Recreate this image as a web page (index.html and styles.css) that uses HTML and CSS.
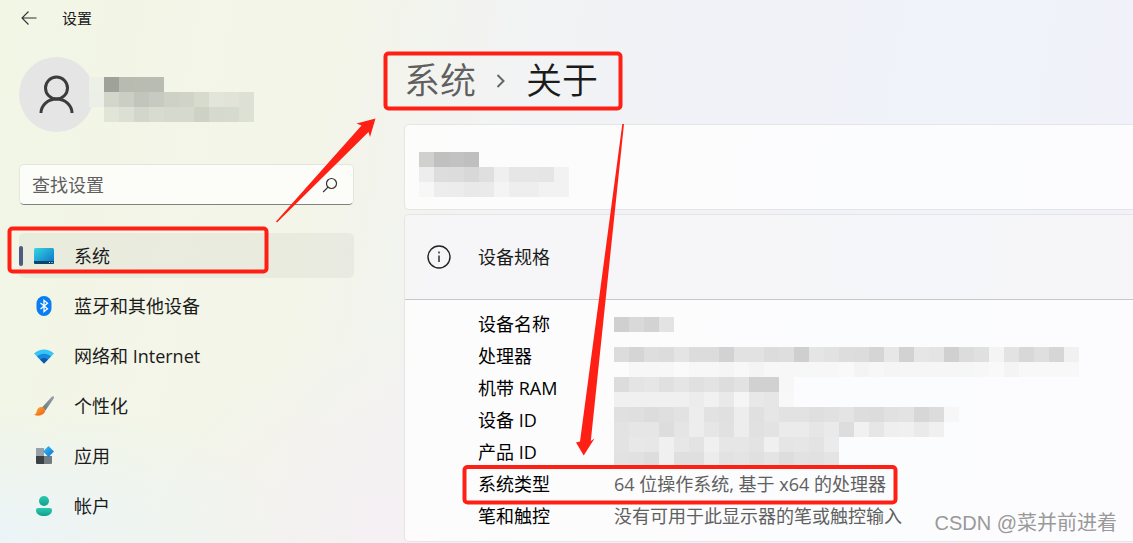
FILE: index.html
```html
<!DOCTYPE html>
<html lang="zh-CN">
<head>
  <meta charset="UTF-8" />
  <meta name="viewport" content="width=device-width, initial-scale=1.0"/>
  <title>设置</title>
  <link rel="stylesheet" href="styles.css">
</head>
<body>
  <header class="titlebar">
    <button class="back" type="button" aria-label="返回">
      <svg width="16" height="16" viewBox="0 0 16 16" fill="none" stroke="#333" stroke-width="1.1"><path d="M15.5 8H1M7.5 1.5L1 8l6.500 6.500"/></svg>
    </button>
    <span>设置</span>
  </header>

  <div class="layout">
    <aside class="sidebar">
      <div class="user">
        <svg class="avatar" width="75" height="75" viewBox="0 0 75 75">
          <circle cx="37.500" cy="37.500" r="37.500" fill="#e5e5e6"/>
          <g fill="none" stroke="#3c3c3c" stroke-width="3"><circle cx="37.500" cy="31" r="11"/><path d="M22 56a15.500 14 0 0 1 31 0"/></g>
        </svg>
        <svg class="mosaic" data-cells="edf0e6 9fa298 b8bbb0 b9bcb1 b9bcb2/eceee8 d3d6ca cbcec2 c1c5bc c7cac0 ced1c5 d0d3c8 d7dacd e2e5d9 e1e3d8 dde0d5/- e1e5d8 dcdfd3 d3d6cb d8dbcf d6d9cd d6d9cd cdd1c6 d6d9ce d7dacf dde0d5"></svg>
      </div>

      <form class="search">
        <input type="text" aria-label="查找设置" placeholder="查找设置">
        <button type="button" aria-label="搜索">
          <svg width="16" height="16" viewBox="0 0 16 16" fill="none" stroke="#333" stroke-width="1.2"><circle cx="9.500" cy="6.500" r="5"/><path d="M6 10.200L1.200 15"/></svg>
        </button>
      </form>

      <nav class="nav">
        <a href="#system" class="active">
          <svg width="22" height="20" viewBox="0 0 22 20">
            <defs><linearGradient id="screen" x1="0" y1="0" x2="1" y2="1"><stop offset="0" stop-color="#35d6e0"/><stop offset="1" stop-color="#0b6fc9"/></linearGradient></defs>
            <rect x="1" y="2" width="20" height="16" rx="1.500" fill="url(#screen)"/>
            <path d="M1 15h20v1.500a1.500 1.500 0 0 1-1.500 1.500h-17A1.500 1.500 0 0 1 1 16.500z" fill="#0b4668"/>
            <path d="M16 16h1v1h-1zM18.500 16h1v1h-1z" fill="#dff"/>
          </svg>
          系统
        </a>
        <a href="#bluetooth">
          <svg width="22" height="20" viewBox="0 0 22 20"><rect x="3.500" width="15" height="20" rx="7.500" fill="#087df5"/><path d="M7.500 7l7 5.700-3.500 3V4.300l3.500 3-7 5.700" fill="none" stroke="#fff" stroke-width="1.300"/></svg>
          蓝牙和其他设备
        </a>
        <a href="#network">
          <svg width="22" height="20" viewBox="0 0 22 20">
            <path d="M1 7.500C7 2 15 2 21 7.500L11 17.500z" fill="#36c5f4"/>
            <path d="M4 10.500C8 6.800 14 6.800 18 10.500l-7 7z" fill="#1689dd"/>
            <path d="M7 13.500c2.500-2 5.500-2 8 0l-4 4z" fill="#1255a8"/>
          </svg>
          网络和 Internet
        </a>
        <a href="#personal">
          <svg width="22" height="20" viewBox="0 0 22 20">
            <defs><linearGradient id="handle" x1="1" y1="0" x2="0" y2="1"><stop offset="0" stop-color="#9aa3ab"/><stop offset="1" stop-color="#69747e"/></linearGradient>
            <linearGradient id="bristle" x1="0" y1="0" x2="1" y2="1"><stop offset="0" stop-color="#ffb02e"/><stop offset="1" stop-color="#ee5a17"/></linearGradient></defs>
            <path d="M20.500.3c.8.500.6 1.400.2 2.200L12.500 14.500l-3.500-3L18.500.900c.6-.6 1.400-.9 2-.6z" fill="url(#handle)"/>
            <path d="M8.500 11c2.200.2 3.500 1.500 3.700 3.600C11.500 19 6 21 1 18.800c2.500-.8 2.400-2.300 3-4.500.6-2 2.400-3.500 4.500-3.300z" fill="url(#bristle)"/>
          </svg>
          个性化
        </a>
        <a href="#apps">
          <svg width="22" height="20" viewBox="0 0 22 20">
            <defs><linearGradient id="tile" x1="0" y1="0" x2="1" y2="1"><stop offset="0" stop-color="#38c2f4"/><stop offset="1" stop-color="#0870da"/></linearGradient></defs>
            <path d="M3 2h8v8H3z" fill="#98a0a8"/><path d="M3 10h8v8H4a1 1 0 0 1-1-1z" fill="#3c4146"/><path d="M11 10h8v7a1 1 0 0 1-1 1h-7z" fill="#737b83"/>
            <path d="M15.500 0l5.500 5.500-5.500 5.500L10 5.500z" fill="url(#tile)"/>
          </svg>
          应用
        </a>
        <a href="#accounts">
          <svg width="22" height="20" viewBox="0 0 22 20">
            <defs><linearGradient id="person" x1="0" y1="0" x2="0" y2="1"><stop offset="0" stop-color="#2acbb0"/><stop offset="1" stop-color="#129f8c"/></linearGradient></defs>
            <circle cx="11" cy="5" r="5" fill="url(#person)"/><path d="M5 12h12a2 2 0 0 1 2 2c0 4-3.500 6-8 6s-8-2-8-6a2 2 0 0 1 2-2z" fill="url(#person)"/>
          </svg>
          帐户
        </a>
      </nav>
    </aside>

    <main class="content">
      <h1 class="breadcrumb">
        <a href="#system">系统</a>
        <svg width="10" height="16" viewBox="0 0 10 16" fill="none" stroke="#666" stroke-width="2"><path d="M1.500 2L7.500 8l-6 6"/></svg>
        <span>关于</span>
      </h1>

      <section class="card device">
        <svg class="mosaic" data-cells="d0d1ce c0 c2 bf/ed dd dc d8 df ef e6 e6 e5 f2/f7 ed ec e9 ea f4 ee ee f2 f2"></svg>
      </section>

      <section class="card">
        <h2 class="card-head">
          <svg width="24" height="24" viewBox="0 0 24 24" fill="none" stroke="#222" stroke-width="1.400"><circle cx="12" cy="12" r="11"/><path d="M12 10.500V17M12 6.500v2"/></svg>
          设备规格
        </h2>
        <dl class="specs">
          <dt>设备名称</dt><dd></dd>
          <dt>处理器</dt><dd></dd>
          <dt>机带 RAM</dt><dd></dd>
          <dt>设备 ID</dt><dd></dd>
          <dt>产品 ID</dt><dd></dd>
          <dt>系统类型</dt><dd>64 位操作系统, 基于 x64 的处理器</dd>
          <dt>笔和触控</dt><dd>没有可用于此显示器的笔或触控输入</dd>
        </dl>
        <svg class="mosaic cover" data-cells="d0 d9 d3 e3/-/dc d5 de dc e4 dc dc d2 e2 e2 dc de cf e5 e2 dd dc d5 e7 d2 e6 e4 d0 dc e0 f4 e3 d8 df d6 f1/- f7 f7 f7 fa f7 f7 f5 f8 f4 f7 f7 f7 f7 f7 f9 f4 f7 f5 f6 f6 f6 f6 f6 f7 f9 f4 f8 f8 f8 f8/dc e4 e6 e0 e5 e0 e3 dd e2 d1 d1 f7/f0 f0 f0 f0 f0 ec f1 e9 f5 e8 e6 f8/e0 df dc df e2 ed e2 e0 ed e0 e6 e2 e2 df e1 e4 dd dc e1 e3 d7 dc f7/e3 e6 e6 dd e5 ed e6 e1 ed e1 e3 eb eb e6 ea dd f1 e6 ef f0 ea f0/e3 e8 e7 f0 e7 e3 f0 e6 e6 e3 f0 e5 e6 e3 eb/e2 e1 dd f0 df df ec e2 e4 e0 e4 dd e2 e1 e4"></svg>
      </section>
    </main>
  </div>

  <svg class="marks" width="900" height="510" viewBox="0 0 900 510">
    <g fill="none" stroke="#ff2015" stroke-width="4">
      <rect x="385.500" y="53.500" width="235" height="55" rx="3"/>
      <rect x="9.500" y="228.500" width="257" height="43" rx="3"/>
      <rect x="464.500" y="467" width="431" height="35.500" rx="3"/>
    </g>
    <g fill="#ff2015">
      <path d="M276 221.500L361.500 125.500L356.500 123.500L375.500 118.500L370 137L368.500 132L277 222.500z"/>
      <path d="M622.300 124L624 124L590.800 441L594.500 438.500L583.700 455.500L576 442.500L580 441.500z"/>
    </g>
  </svg>
  <div class="watermark">CSDN @菜并前进着</div>

<script src="script.js"></script>
</body>
</html>
```
FILE: styles.css
```css
* {
  box-sizing: border-box;
}

body {
  position: relative;
  margin: 0;
  min-height: 100vh;
  overflow: hidden;
  font-family: "Open Sans", "Noto Sans CJK SC", sans-serif;
  font-size: 18px;
  line-height: 32px;
  color: #1b1b1b;
  background:
    radial-gradient(ellipse at 0 100%, #ebf4f8 0, rgba(235, 244, 248, 0) 300px),
    radial-gradient(ellipse at 36% 100%, #f5f0f4 0, rgba(245, 240, 244, 0) 280px),
    linear-gradient(100deg, #f2f6e5 0%, #f3f5e9 28%, #f2f3f3 42%, #f1f2f8 60%, #f0f3fa 80%, #f2f2f9 100%);
}

a {
  color: inherit;
  text-decoration: none;
}

button {
  padding: 0;
  border: none;
  background: none;
}

svg {
  display: block;
  flex: none;
}

.titlebar {
  display: flex;
  align-items: center;
  gap: 25px;
  height: 36px;
  padding-left: 21px;
  font-size: 15px;
}

.layout {
  display: flex;
  gap: 50px;
  padding-left: 19px;
}

.sidebar {
  flex: none;
  width: 335px;
  padding-top: 21px;
}

.user {
  display: flex;
  align-items: center;
}

.user .mosaic {
  margin-left: -5px;
  margin-top: 10px;
}

.search {
  display: flex;
  align-items: center;
  height: 41px;
  margin-top: 32px;
  padding: 0 15px 0 12px;
  border: 1px solid #e4e6dc;
  border-bottom-color: #80827c;
  border-radius: 5px;
  background: #fcfdf9;
}

.search input {
  flex: 1;
  min-width: 0;
  padding: 0;
  border: none;
  outline: none;
  background: none;
  font: inherit;
}

.search input::placeholder {
  color: #5f5f5f;
}

.nav {
  display: flex;
  flex-direction: column;
  gap: 5px;
  margin-top: 28px;
}

.nav a {
  position: relative;
  display: flex;
  align-items: center;
  gap: 19px;
  height: 45px;
  padding-left: 14px;
  border-radius: 5px;
}

.nav .active {
  background: rgba(0, 0, 0, 0.04);
}

.nav .active::before {
  content: "";
  position: absolute;
  left: 0;
  top: 13px;
  width: 4px;
  height: 20px;
  border-radius: 2px;
  background: #4f5982;
}

.content {
  flex: 1;
  min-width: 0;
}

.breadcrumb {
  display: flex;
  align-items: center;
  gap: 20px;
  height: 88px;
  margin: 0;
  padding-top: 2px;
  font-size: 36px;
  font-weight: 350;
}

.breadcrumb a {
  color: #5f5f5f;
}

.card {
  position: relative;
  border: 1px solid #e5e5e5;
  border-right: none;
  border-radius: 5px 0 0 5px;
  background: rgba(255, 255, 255, 0.75);
}

.device {
  height: 86px;
  margin-bottom: 4px;
  padding: 27px 14px;
}

.card-head {
  display: flex;
  align-items: center;
  gap: 27px;
  height: 85px;
  margin: 0;
  padding-left: 22px;
  border-bottom: 1px solid #c8c8ca;
  border-radius: 5px 0 0 0;
  background: rgba(241, 241, 245, 0.6);
  font-size: 18px;
  font-weight: 400;
}

.specs {
  display: grid;
  grid-template-columns: 136px 1fr;
  grid-auto-rows: 32px;
  margin: 0;
  padding: 8px 0 9px 73px;
  color: #000;
}

.specs dd {
  margin: 0;
  color: #606060;
}

.cover {
  position: absolute;
  left: 209px;
  top: 102px;
}

.marks {
  position: absolute;
  left: 0;
  top: 0;
  pointer-events: none;
}

.watermark {
  position: absolute;
  right: 16px;
  bottom: 4px;
  font-family: "Liberation Sans", "Noto Sans CJK SC", sans-serif;
  font-size: 20px;
  color: #999;
}
```
FILE: script.js
```js
const CELL = 15;

// rows are split by "/", cells by spaces; two digits stand for a grey
document.querySelectorAll(".mosaic").forEach((svg) => {
  const rows = svg.dataset.cells.split("/").map((row) => row.split(" "));
  svg.setAttribute("width", Math.max(...rows.map((row) => row.length)) * CELL);
  svg.setAttribute("height", rows.length * CELL);

  rows.forEach((row, y) => {
    row.forEach((value, x) => {
      if (value === "-") return;
      const rect = document.createElementNS("http://www.w3.org/2000/svg", "rect");
      rect.setAttribute("x", x * CELL);
      rect.setAttribute("y", y * CELL);
      rect.setAttribute("width", CELL);
      rect.setAttribute("height", CELL);
      rect.setAttribute("fill", "#" + (value.length === 2 ? value.repeat(3) : value));
      svg.appendChild(rect);
    });
  });
});
```
